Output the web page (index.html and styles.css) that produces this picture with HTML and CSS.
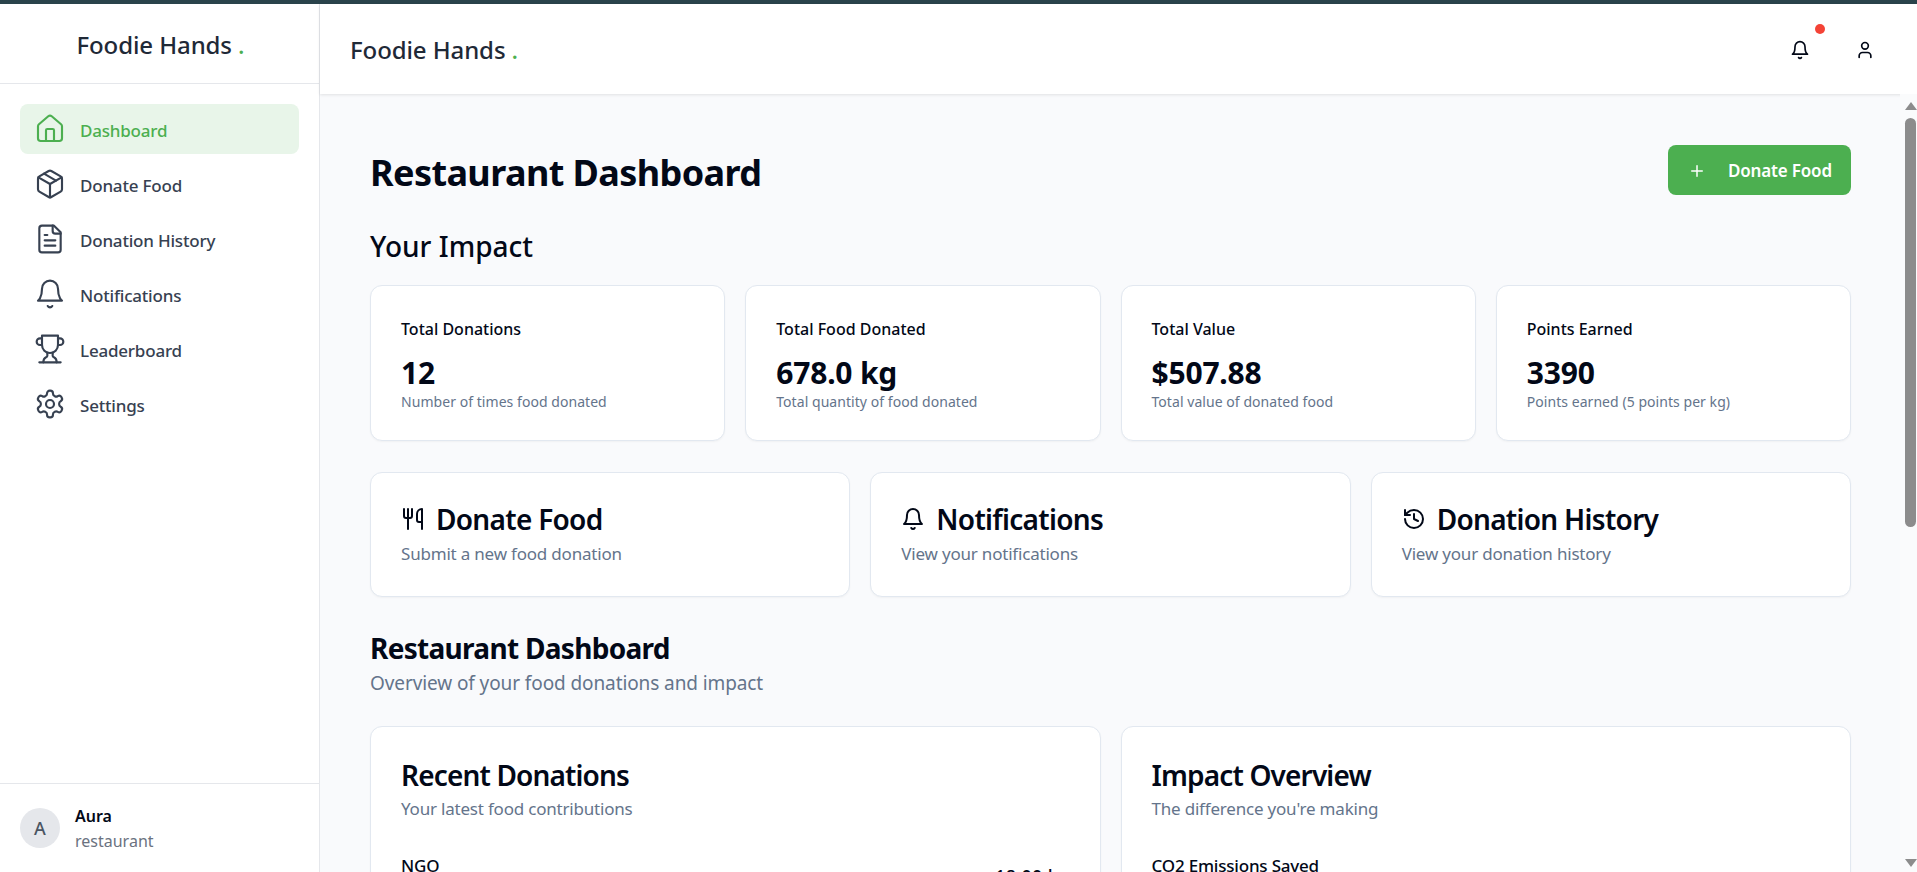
FILE: index.html
```html
<!DOCTYPE html>
<html lang="en">
<head>
    <meta charset="utf-8"/>
    <title>Foodie Hands</title>
    <link rel="stylesheet" href="styles.css">
</head>
<body>
<svg class="iconDefs" aria-hidden="true">
    <defs>
        <symbol id="i-home" viewBox="0 0 24 24"><path d="M15 21v-8a1 1 0 0 0-1-1h-4a1 1 0 0 0-1 1v8"/><path d="M3 10a2 2 0 0 1 .709-1.528l7-6a2 2 0 0 1 2.582 0l7 6A2 2 0 0 1 21 10v9a2 2 0 0 1-2 2H5a2 2 0 0 1-2-2z"/></symbol>
        <symbol id="i-package" viewBox="0 0 24 24"><path d="m7.5 4.27 9 5.15"/><path d="M21 8a2 2 0 0 0-1-1.73l-7-4a2 2 0 0 0-2 0l-7 4A2 2 0 0 0 3 8v8a2 2 0 0 0 1 1.73l7 4a2 2 0 0 0 2 0l7-4A2 2 0 0 0 21 16Z"/><path d="m3.3 7 8.7 5 8.7-5"/><path d="M12 22V12"/></symbol>
        <symbol id="i-file" viewBox="0 0 24 24"><path d="M15 2H6a2 2 0 0 0-2 2v16a2 2 0 0 0 2 2h12a2 2 0 0 0 2-2V7Z"/><path d="M14 2v4a2 2 0 0 0 2 2h4"/><path d="M10 9H8"/><path d="M16 13H8"/><path d="M16 17H8"/></symbol>
        <symbol id="i-bell" viewBox="0 0 24 24"><path d="M6 8a6 6 0 0 1 12 0c0 7 3 9 3 9H3s3-2 3-9"/><path d="M10.3 21a1.94 1.94 0 0 0 3.4 0"/></symbol>
        <symbol id="i-trophy" viewBox="0 0 24 24"><path d="M6 9H4.5a2.5 2.5 0 0 1 0-5H6"/><path d="M18 9h1.5a2.5 2.5 0 0 0 0-5H18"/><path d="M4 22h16"/><path d="M10 14.66V17c0 .55-.47.98-.97 1.21C7.85 18.75 7 20.24 7 22"/><path d="M14 14.66V17c0 .55.47.98.97 1.21C16.15 18.75 17 20.24 17 22"/><path d="M18 2H6v7a6 6 0 0 0 12 0V2Z"/></symbol>
        <symbol id="i-settings" viewBox="0 0 24 24"><path d="M12.22 2h-.44a2 2 0 0 0-2 2v.18a2 2 0 0 1-1 1.73l-.43.25a2 2 0 0 1-2 0l-.15-.08a2 2 0 0 0-2.73.73l-.22.38a2 2 0 0 0 .73 2.73l.15.1a2 2 0 0 1 1 1.72v.51a2 2 0 0 1-1 1.74l-.15.09a2 2 0 0 0-.73 2.73l.22.38a2 2 0 0 0 2.73.73l.15-.08a2 2 0 0 1 2 0l.43.25a2 2 0 0 1 1 1.73V20a2 2 0 0 0 2 2h.44a2 2 0 0 0 2-2v-.18a2 2 0 0 1 1-1.73l.43-.25a2 2 0 0 1 2 0l.15.08a2 2 0 0 0 2.73-.73l.22-.39a2 2 0 0 0-.73-2.73l-.15-.08a2 2 0 0 1-1-1.74v-.5a2 2 0 0 1 1-1.74l.15-.09a2 2 0 0 0 .73-2.73l-.22-.38a2 2 0 0 0-2.73-.73l-.15.08a2 2 0 0 1-2 0l-.43-.25a2 2 0 0 1-1-1.73V4a2 2 0 0 0-2-2z"/><circle cx="12" cy="12" r="3"/></symbol>
        <symbol id="i-utensils" viewBox="0 0 24 24"><path d="M3 2v7c0 1.1.9 2 2 2h4a2 2 0 0 0 2-2V2"/><path d="M7 2v20"/><path d="M21 15V2a5 5 0 0 0-5 5v6c0 1.1.9 2 2 2h3Zm0 0v7"/></symbol>
        <symbol id="i-history" viewBox="0 0 24 24"><path d="M3 12a9 9 0 1 0 9-9 9.75 9.75 0 0 0-6.74 2.74L3 8"/><path d="M3 3v5h5"/><path d="M12 7v5l4 2"/></symbol>
        <symbol id="i-user" viewBox="0 0 24 24"><path d="M19 21v-2a4 4 0 0 0-4-4H9a4 4 0 0 0-4 4v2"/><circle cx="12" cy="7" r="4"/></symbol>
        <symbol id="i-plus" viewBox="0 0 24 24"><path d="M5 12h14"/><path d="M12 5v14"/></symbol>
    </defs>
</svg>

<div class="topStrip"></div>
<div class="app">
    <aside class="sidebar">
        <div class="brandBox"><span class="brand">Foodie Hands <span class="brandDot">.</span></span></div>
        <nav class="nav">
            <a class="navItem active"><svg class="navIcon"><use href="#i-home"/></svg><span class="navText">Dashboard</span></a>
            <a class="navItem"><svg class="navIcon"><use href="#i-package"/></svg><span class="navText">Donate Food</span></a>
            <a class="navItem"><svg class="navIcon"><use href="#i-file"/></svg><span class="navText">Donation History</span></a>
            <a class="navItem"><svg class="navIcon"><use href="#i-bell"/></svg><span class="navText">Notifications</span></a>
            <a class="navItem"><svg class="navIcon"><use href="#i-trophy"/></svg><span class="navText">Leaderboard</span></a>
            <a class="navItem"><svg class="navIcon"><use href="#i-settings"/></svg><span class="navText">Settings</span></a>
        </nav>
        <div class="userBox">
            <div class="avatar">A</div>
            <div>
                <div class="userName">Aura</div>
                <div class="userRole">restaurant</div>
            </div>
        </div>
    </aside>

    <div class="mainCol">
        <header class="topbar">
            <span class="brand">Foodie Hands <span class="brandDot">.</span></span>
            <div class="topIcons">
                <button class="iconBtn"><svg class="topIcon"><use href="#i-bell"/></svg><span class="redDot"></span></button>
                <button class="iconBtn"><svg class="topIcon"><use href="#i-user"/></svg></button>
            </div>
        </header>

        <main class="content">
            <div class="pageHead">
                <h1>Restaurant Dashboard</h1>
                <a class="donateBtn"><svg class="plusIcon"><use href="#i-plus"/></svg>Donate Food</a>
            </div>

            <h2 class="impactTitle">Your Impact</h2>
            <div class="statGrid">
                <div class="card statCard">
                    <div class="statLabel">Total Donations</div>
                    <div class="statValue">12</div>
                    <div class="statNote">Number of times food donated</div>
                </div>
                <div class="card statCard">
                    <div class="statLabel">Total Food Donated</div>
                    <div class="statValue">678.0 kg</div>
                    <div class="statNote">Total quantity of food donated</div>
                </div>
                <div class="card statCard">
                    <div class="statLabel">Total Value</div>
                    <div class="statValue">$507.88</div>
                    <div class="statNote">Total value of donated food</div>
                </div>
                <div class="card statCard">
                    <div class="statLabel">Points Earned</div>
                    <div class="statValue">3390</div>
                    <div class="statNote">Points earned (5 points per kg)</div>
                </div>
            </div>

            <div class="quickGrid">
                <div class="card quickCard">
                    <h3 class="quickTitle"><svg class="quickIcon"><use href="#i-utensils"/></svg>Donate Food</h3>
                    <p class="quickNote">Submit a new food donation</p>
                </div>
                <div class="card quickCard">
                    <h3 class="quickTitle"><svg class="quickIcon"><use href="#i-bell"/></svg>Notifications</h3>
                    <p class="quickNote">View your notifications</p>
                </div>
                <div class="card quickCard">
                    <h3 class="quickTitle"><svg class="quickIcon"><use href="#i-history"/></svg>Donation History</h3>
                    <p class="quickNote">View your donation history</p>
                </div>
            </div>

            <h2 class="sectionTitle">Restaurant Dashboard</h2>
            <p class="sectionNote">Overview of your food donations and impact</p>

            <div class="panelGrid">
                <div class="card panel">
                    <h3 class="panelTitle">Recent Donations</h3>
                    <p class="panelNote">Your latest food contributions</p>
                    <div class="donationRow">
                        <span class="rowName">NGO</span>
                        <span class="rowAmount">18.00 kg</span>
                    </div>
                </div>
                <div class="card panel">
                    <h3 class="panelTitle">Impact Overview</h3>
                    <p class="panelNote">The difference you're making</p>
                    <div class="donationRow">
                        <span class="rowName">CO2 Emissions Saved</span>
                    </div>
                </div>
            </div>
        </main>

        <div class="fakeScroll">
            <span class="arrowUp"></span>
            <span class="thumb"></span>
            <span class="arrowDown"></span>
        </div>
    </div>
</div>
</body>
</html>
```

FILE: styles.css
```css
*{
    box-sizing: border-box;
}
html, body{
    height: 100%;
    margin: 0;
    overflow: hidden;
}
body{
    font-family: "Noto Sans", "Open Sans", sans-serif;
    color: #020817;
    background: #fff;
    display: flex;
    flex-direction: column;
}
h1, h2, h3, p{
    margin: 0;
}
svg{
    fill: none;
    stroke: currentColor;
    stroke-width: 2;
    stroke-linecap: round;
    stroke-linejoin: round;
    flex-shrink: 0;
}
.iconDefs{
    display: none;
}
.topStrip{
    height: 4px;
    background: #2a434b;
    flex-shrink: 0;
}
.app{
    flex: 1;
    display: flex;
    min-height: 0;
}

/* sidebar */
.sidebar{
    width: 320px;
    flex-shrink: 0;
    border-right: 1px solid #e5e7eb;
    display: flex;
    flex-direction: column;
    background: #fff;
}
.brandBox{
    height: 80px;
    border-bottom: 1px solid #e5e7eb;
    display: flex;
    align-items: center;
    justify-content: center;
    padding: 2px 0 0 2px;
}
.brand{
    font-size: 24px;
    font-weight: 500;
    color: #1f2937;
    letter-spacing: -0.1px;
    white-space: nowrap;
}
.brandDot{
    color: #4caf50;
}
.nav{
    flex: 1;
    padding: 20px;
    display: flex;
    flex-direction: column;
    gap: 5px;
}
.navItem{
    height: 50px;
    display: flex;
    align-items: center;
    gap: 14px;
    padding: 0 14px;
    border-radius: 8px;
    font-size: 17px;
    font-weight: 500;
    letter-spacing: -0.2px;
    color: #374151;
}
.navItem.active{
    background: #e8f5e9;
    color: #4caf50;
}
.navIcon{
    width: 32px;
    height: 32px;
    stroke-width: 1.6;
}
.navText{
    padding-top: 2px;
}
.userBox{
    height: 89px;
    border-top: 1px solid #e5e7eb;
    padding: 0 20px;
    display: flex;
    align-items: center;
    gap: 15px;
}
.avatar{
    width: 40px;
    height: 40px;
    border-radius: 50%;
    background: #e5e7eb;
    color: #4b5563;
    font-size: 18px;
    font-weight: 500;
    display: flex;
    align-items: center;
    justify-content: center;
}
.userName{
    font-size: 16px;
    font-weight: 600;
    line-height: 24px;
}
.userRole{
    font-size: 16px;
    line-height: 24px;
    padding-top: 1px;
    color: #6b7280;
}

/* main column */
.mainCol{
    flex: 1;
    min-width: 0;
    display: flex;
    flex-direction: column;
    position: relative;
    background: #f9fafc;
}
.topbar{
    height: 90px;
    flex-shrink: 0;
    background: #fff;
    padding: 1px 32px 0 30px;
    display: flex;
    align-items: center;
    justify-content: space-between;
    box-shadow: 0 1px 3px rgba(0,0,0,0.1);
    z-index: 1;
}
.topIcons{
    display: flex;
    gap: 25px;
}
.iconBtn{
    width: 40px;
    height: 40px;
    border: none;
    background: none;
    padding: 0;
    color: #020817;
    position: relative;
    display: flex;
    align-items: center;
    justify-content: center;
}
.topIcon{
    width: 20px;
    height: 20px;
}
.redDot{
    position: absolute;
    top: -6px;
    right: -5px;
    width: 10px;
    height: 10px;
    border-radius: 50%;
    background: #f44336;
}
.content{
    flex: 1;
    min-height: 0;
    overflow: hidden;
    padding: 51px 66px 0 50px;
}
.pageHead{
    display: flex;
    align-items: center;
    justify-content: space-between;
    height: 50px;
}
h1{
    font-size: 36px;
    font-weight: 700;
    letter-spacing: -0.6px;
    padding-top: 4px;
}
.donateBtn{
    width: 183px;
    height: 50px;
    background: #4caf50;
    color: #fff;
    border-radius: 8px;
    display: flex;
    align-items: center;
    padding: 1px 0 0 20px;
    gap: 22px;
    font-size: 17px;
    font-weight: 600;
    letter-spacing: -0.17px;
}
.plusIcon{
    width: 18px;
    height: 18px;
}
.impactTitle{
    font-size: 28px;
    font-weight: 500;
    line-height: 40px;
    margin-top: 31px;
    margin-bottom: 19px;
}
.card{
    background: #fff;
    border: 1px solid #e2e8f0;
    border-radius: 12px;
    box-shadow: 0 1px 2px rgba(0,0,0,0.04);
}
.statGrid{
    display: grid;
    grid-template-columns: repeat(4, 1fr);
    gap: 20px;
}
.statCard{
    height: 156px;
    padding: 31px 30px 0;
}
.statLabel{
    font-size: 16px;
    font-weight: 500;
    line-height: 24px;
}
.statValue{
    font-size: 30px;
    font-weight: 700;
    letter-spacing: -0.2px;
    line-height: 36px;
    margin-top: 14px;
}
.statNote{
    font-size: 14px;
    letter-spacing: 0.05px;
    line-height: 20px;
    margin-top: 1px;
    color: #64748b;
}
.quickGrid{
    display: grid;
    grid-template-columns: repeat(3, 1fr);
    gap: 20px;
    margin-top: 31px;
}
.quickCard{
    height: 125px;
    padding: 28px 30px 0;
}
.quickTitle{
    display: flex;
    align-items: center;
    gap: 11px;
    font-size: 28px;
    font-weight: 600;
    letter-spacing: -0.7px;
    line-height: 36px;
}
.quickIcon{
    width: 24px;
    height: 24px;
}
.quickNote{
    font-size: 17px;
    letter-spacing: -0.2px;
    line-height: 24px;
    color: #64748b;
    margin-top: 5px;
}
.sectionTitle{
    font-size: 28px;
    font-weight: 700;
    letter-spacing: -0.7px;
    line-height: 36px;
    margin-top: 33px;
}
.sectionNote{
    font-size: 19px;
    letter-spacing: -0.1px;
    line-height: 28px;
    color: #64748b;
    margin-top: 3px;
}
.panelGrid{
    display: grid;
    grid-template-columns: repeat(2, 1fr);
    gap: 20px;
    margin-top: 29px;
}
.panel{
    height: 300px;
    padding: 30px;
}
.panelTitle{
    font-size: 28px;
    font-weight: 600;
    letter-spacing: -0.85px;
    line-height: 36px;
}
.panelNote{
    font-size: 17px;
    letter-spacing: -0.2px;
    line-height: 24px;
    color: #64748b;
    margin-top: 4px;
}
.donationRow{
    display: flex;
    justify-content: space-between;
    margin-top: 33px;
}
.rowName{
    font-size: 17px;
    font-weight: 500;
    letter-spacing: -0.2px;
}
.rowAmount{
    font-size: 18px;
    font-weight: 500;
    letter-spacing: 0.3px;
    margin-top: 10px;
}

/* window scrollbar, drawn over the page edge */
.fakeScroll{
    position: absolute;
    top: 90px;
    right: 0;
    bottom: 0;
    width: 17px;
    padding-left: 4px;
    background: #fafbfc;
    display: flex;
    flex-direction: column;
    align-items: center;
    z-index: 2;
}
.arrowUp, .arrowDown{
    width: 0;
    height: 0;
    border-left: 6px solid transparent;
    border-right: 6px solid transparent;
}
.arrowUp{
    border-bottom: 8px solid #8c8c8c;
    margin-top: 8px;
}
.thumb{
    width: 11px;
    height: 409px;
    border-radius: 6px;
    background: #8c8c8c;
    margin-top: 8px;
}
.arrowDown{
    border-top: 8px solid #8c8c8c;
    margin-top: auto;
    margin-bottom: 5px;
}
```
